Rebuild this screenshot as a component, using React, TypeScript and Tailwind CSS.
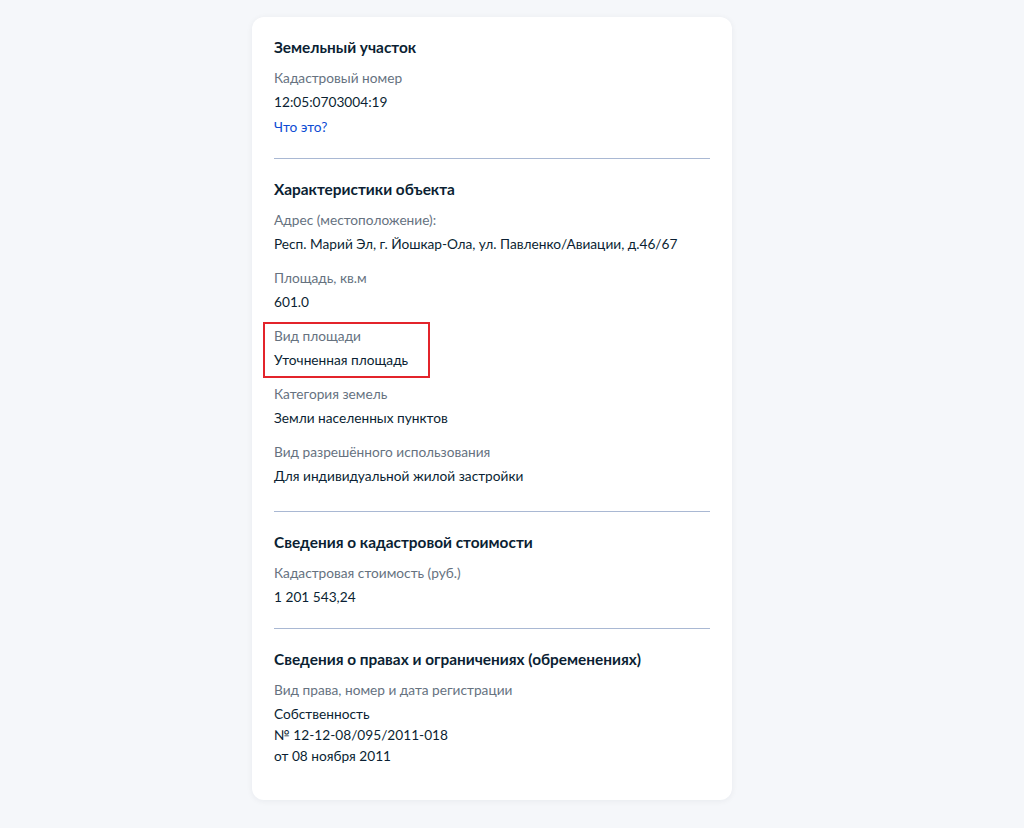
type Field = { label: string; value: string[]; marked?: boolean };

type Section = {
  title: string;
  fields: Field[];
  link?: string;
  bottom: string;
};

const sections: Section[] = [
  {
    title: "Земельный участок",
    fields: [{ label: "Кадастровый номер", value: ["12:05:0703004:19"] }],
    link: "Что это?",
    bottom: "pb-[21px]",
  },
  {
    title: "Характеристики объекта",
    fields: [
      {
        label: "Адрес (местоположение):",
        value: ["Респ. Марий Эл, г. Йошкар-Ола, ул. Павленко/Авиации, д.46/67"],
      },
      { label: "Площадь, кв.м", value: ["601.0"] },
      { label: "Вид площади", value: ["Уточненная площадь"], marked: true },
      { label: "Категория земель", value: ["Земли населенных пунктов"] },
      { label: "Вид разрешённого использования", value: ["Для индивидуальной жилой застройки"] },
    ],
    bottom: "pb-[25px]",
  },
  {
    title: "Сведения о кадастровой стоимости",
    fields: [{ label: "Кадастровая стоимость (руб.)", value: ["1 201 543,24"] }],
    bottom: "pb-[21px]",
  },
  {
    title: "Сведения о правах и ограничениях (обременениях)",
    fields: [
      {
        label: "Вид права, номер и дата регистрации",
        value: ["Собственность", "№ 12-12-08/095/2011-018", "от 08 ноября 2011"],
      },
    ],
    bottom: "pb-[34px]",
  },
];

function FieldRow({ field }: { field: Field }) {
  return (
    <div className="relative">
      <div className="text-[13.7px] leading-5 text-[#66727f]">{field.label}</div>
      <div className="mt-[3px] text-[13.7px] leading-[21px] text-[#0b1f33]">
        {field.value.map((line) => (
          <div key={line}>{line}</div>
        ))}
      </div>
      {/* highlight frame */}
      {field.marked && (
        <div className="pointer-events-none absolute -left-[11px] -top-[4px] h-[56px] w-[167px] border-2 border-[#e3242b]" />
      )}
    </div>
  );
}

export default function App() {
  return (
    <div
      className="min-h-[828px] w-full bg-[#f5f7fa] pt-[17px] pb-[28px]"
      style={{ fontFamily: "Lato, 'Noto Sans', sans-serif" }}
    >
      <div className="ml-[252px] w-[480px] rounded-xl bg-white px-[22px] pt-[18px] shadow-[0_1px_6px_rgba(11,31,51,0.06)]">
        {sections.map((s, i) => (
          <div
            key={s.title}
            className={i < sections.length - 1 ? `${s.bottom} border-b border-[#a9b8d3]` : s.bottom}
          >
            <div className={i > 0 ? "pt-[18px]" : ""}>
              <h2 className="text-[15.4px] font-bold leading-6 text-[#0b1f33]">{s.title}</h2>
              <div className="mt-[9px] flex flex-col gap-[14px]">
                {s.fields.map((f) => (
                  <FieldRow key={f.label} field={f} />
                ))}
              </div>
              {s.link && (
                <a href="#" className="mt-[5px] block text-[13.7px] leading-5 text-[#0d4cd3]">
                  {s.link}
                </a>
              )}
            </div>
          </div>
        ))}
      </div>
    </div>
  );
}
